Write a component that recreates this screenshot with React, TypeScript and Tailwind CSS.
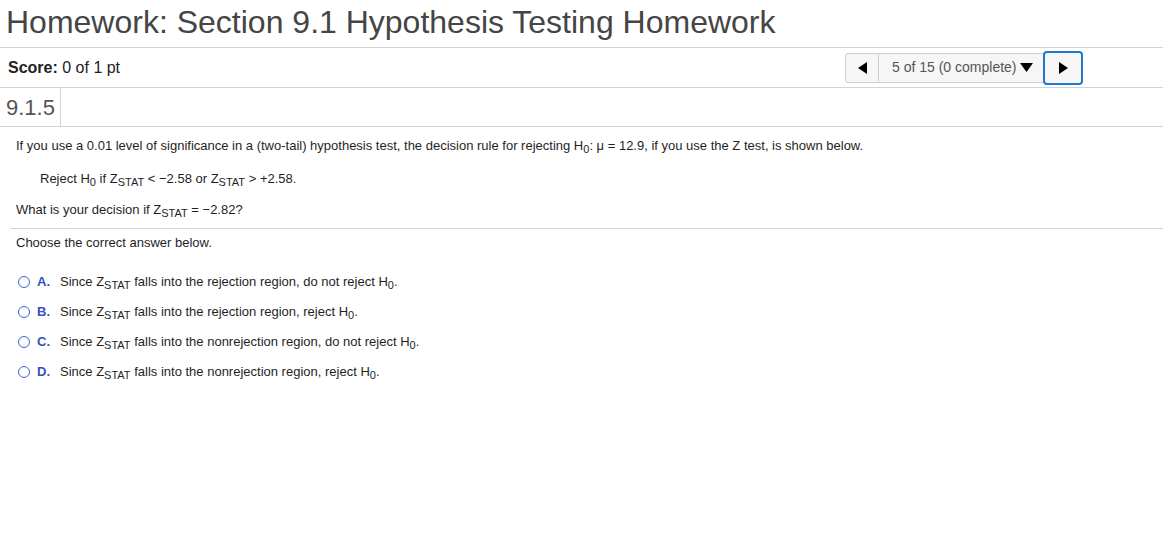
import React from "react";

function Sub({ children }: { children: React.ReactNode }) {
  return <sub className="text-[11px] relative top-[3px] align-baseline">{children}</sub>;
}

function Z() {
  return (
    <>
      Z<Sub>STAT</Sub>
    </>
  );
}

function H0() {
  return (
    <>
      H<Sub>0</Sub>
    </>
  );
}

const options: { letter: string; body: React.ReactNode }[] = [
  { letter: "A.", body: <>Since <Z /> falls into the rejection region, do not reject <H0 />.</> },
  { letter: "B.", body: <>Since <Z /> falls into the rejection region, reject <H0 />.</> },
  { letter: "C.", body: <>Since <Z /> falls into the nonrejection region, do not reject <H0 />.</> },
  { letter: "D.", body: <>Since <Z /> falls into the nonrejection region, reject <H0 />.</> },
];

export default function App() {
  return (
    <div className="w-[1163px] h-[538px] bg-white font-['Liberation_Sans',Arial,sans-serif] text-[#1f1f1f] overflow-hidden">
      <h1 className="h-[47px] pl-[6px] pt-[3px] text-[32px] leading-[38px] text-[#454545]">
        Homework: Section 9.1 Hypothesis Testing Homework
      </h1>

      <div className="h-[41px] border-y border-[#d0d3db] flex items-center justify-between pl-[8px] pr-[80px]">
        <div className="text-[16px] text-[#222]">
          <span className="font-bold">Score:</span> 0 of 1 pt
        </div>
        <div className="flex items-center">
          <button className="w-[34px] h-[30px] bg-[#f6f6f6] border border-[#cfcfcf] rounded-l-[3px] flex items-center justify-center">
            <svg width="9" height="12" viewBox="0 0 9 12"><path d="M9 0 L0 6 L9 12 Z" fill="#000" /></svg>
          </button>
          <div className="w-[164px] h-[30px] bg-[#f6f6f6] border-y border-[#cfcfcf] flex items-center pl-[13px] gap-[3px] text-[14px] text-[#555]">
            5 of 15 (0 complete)
            <svg width="13" height="9" viewBox="0 0 13 9"><path d="M0 0 L13 0 L6.5 9 Z" fill="#000" /></svg>
          </div>
          <button className="w-[40px] h-[34px] bg-[#f6f6f6] border-2 border-[#1f78cf] rounded-[4px] flex items-center justify-center">
            <svg width="9" height="12" viewBox="0 0 9 12"><path d="M0 0 L9 6 L0 12 Z" fill="#000" /></svg>
          </button>
        </div>
      </div>

      <div className="h-[39px] border-b border-[#d0d3db] flex">
        <div className="w-[61px] border-r border-[#d0d3db] pl-[6px] flex items-center text-[22px] text-[#555]">9.1.5</div>
      </div>

      <div className="text-[13px] leading-[16px]">
        <p className="pl-[16px] pt-[11px]">
          If you use a 0.01 level of significance in a (two-tail) hypothesis test, the decision rule for rejecting <H0 />: μ = 12.9, if you use the Z test, is shown below.
        </p>
        <p className="pl-[40px] pt-[17px]">
          Reject <H0 /> if <Z /> &lt; −2.58 or <Z /> &gt; +2.58.
        </p>
        <p className="pl-[16px] pt-[15px]">
          What is your decision if <Z /> = −2.82?
        </p>
        <div className="ml-[10px] mt-[10px] border-t border-[#d0d3db]" />
        <p className="pl-[16px] pt-[6px]">Choose the correct answer below.</p>

        <div className="pl-[18px] pt-[23px] flex flex-col gap-[14px]">
          {options.map((o) => (
            <div key={o.letter} className="flex items-center">
              <span className="w-[12px] h-[12px] rounded-full border border-[#3d64c6]" />
              <span className="ml-[7px] w-[23px] font-bold text-[#3553b8]">{o.letter}</span>
              <span>{o.body}</span>
            </div>
          ))}
        </div>
      </div>
    </div>
  );
}
